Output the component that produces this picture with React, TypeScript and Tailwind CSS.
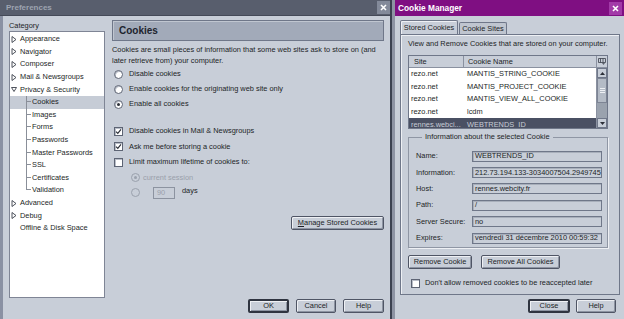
import React from "react";

type TreeItem = { label: string; level: 0 | 1; twisty?: "closed" | "open"; selected?: boolean; last?: boolean };

const treeItems: TreeItem[] = [
  { label: "Appearance", level: 0, twisty: "closed" },
  { label: "Navigator", level: 0, twisty: "closed" },
  { label: "Composer", level: 0, twisty: "closed" },
  { label: "Mail & Newsgroups", level: 0, twisty: "closed" },
  { label: "Privacy & Security", level: 0, twisty: "open" },
  { label: "Cookies", level: 1, selected: true },
  { label: "Images", level: 1 },
  { label: "Forms", level: 1 },
  { label: "Passwords", level: 1 },
  { label: "Master Passwords", level: 1 },
  { label: "SSL", level: 1 },
  { label: "Certificates", level: 1 },
  { label: "Validation", level: 1, last: true },
  { label: "Advanced", level: 0, twisty: "closed" },
  { label: "Debug", level: 0, twisty: "closed" },
  { label: "Offline & Disk Space", level: 0 },
];

const cookies = [
  { site: "rezo.net", name: "MANTIS_STRING_COOKIE" },
  { site: "rezo.net", name: "MANTIS_PROJECT_COOKIE" },
  { site: "rezo.net", name: "MANTIS_VIEW_ALL_COOKIE" },
  { site: "rezo.net", name: "lcdm" },
  { site: "rennes.webci...", name: "WEBTRENDS_ID", selected: true },
];

const fields = [
  { label: "Name:", value: "WEBTRENDS_ID" },
  { label: "Information:", value: "212.73.194.133-3034007504.2949745" },
  { label: "Host:", value: "rennes.webcity.fr" },
  { label: "Path:", value: "/" },
  { label: "Server Secure:", value: "no" },
  { label: "Expires:", value: "vendredi 31 décembre 2010 00:59:32" },
];

const Twisty = ({ open }: { open: boolean }) => (
  <svg width="6" height="7" viewBox="0 0 6 7" className="shrink-0">
    {open ? (
      <path d="M0.5 1.5 H5.5 L3 5.5 Z" fill="none" stroke="#3a3f4a" strokeWidth="0.9" />
    ) : (
      <path d="M1 0.5 V6.5 L5 3.5 Z" fill="none" stroke="#3a3f4a" strokeWidth="0.9" />
    )}
  </svg>
);

const Radio = ({ checked, disabled }: { checked?: boolean; disabled?: boolean }) => (
  <span
    className={`w-[9px] h-[9px] rounded-full border flex items-center justify-center shrink-0 ${
      disabled ? "border-[#9aa1ad] bg-[#c8ced8]" : "border-[#5d6474] bg-white shadow-[inset_1px_1px_0_#b9bec8]"
    }`}
  >
    {checked && <span className={`w-[3px] h-[3px] rounded-full ${disabled ? "bg-[#9aa1ad]" : "bg-[#2b2f38]"}`} />}
  </span>
);

const Check = ({ checked }: { checked?: boolean }) => (
  <span className="w-[9px] h-[9px] border border-[#5d6474] bg-white shadow-[inset_1px_1px_0_#b9bec8] flex items-center justify-center shrink-0">
    {checked && (
      <svg width="7" height="7" viewBox="0 0 7 7">
        <path d="M1 3.6 L2.8 5.4 L6 1.4" fill="none" stroke="#2b2f38" strokeWidth="1.2" />
      </svg>
    )}
  </span>
);

const Btn = ({ children, def, w }: { children: React.ReactNode; def?: boolean; w: string }) => (
  <div
    className={`${w} h-[14px] flex items-center justify-center rounded-[2px] bg-[#c8ced8] shadow-[inset_1px_1px_0_#eef0f4,inset_-1px_-1px_0_#8d94a2] ${
      def ? "border-2 border-[#2f3440]" : "border border-[#4f5565]"
    }`}
  >
    {children}
  </div>
);

const CloseBox = ({ bg }: { bg: string }) => (
  <div className={`w-[13px] h-[13px] flex items-center justify-center ${bg}`}>
    <svg width="7" height="7" viewBox="0 0 7 7">
      <path d="M1 1 L6 6 M6 1 L1 6" stroke="white" strokeWidth="1.6" />
    </svg>
  </div>
);

export default function App() {
  return (
    <div className="w-[624px] h-[319px] flex bg-[#c8ced8] text-[#1c1f26] text-[7.4px] leading-[10px] font-['Liberation_Sans',Arial,sans-serif] overflow-hidden">
      {/* Preferences */}
      <div className="w-[392px] h-full flex flex-col border-r-2 border-[#3b4150]">
        <div className="h-[16px] bg-[#585e6d] flex items-center justify-between pl-[6px] pr-[0px] border-b border-[#454a58]">
          <span className="font-bold text-[8px] text-[#9ea4b1]">Preferences</span>
          <CloseBox bg="bg-[#838a9a]" />
        </div>
        <div className="flex-1 flex border-l-[3px] border-[#8a91a3] pl-[6px]">
          {/* category */}
          <div className="w-[96px] flex flex-col">
            <div className="mt-[4px] h-[11px] leading-[11px]">Category</div>
            <div className="h-[267px] bg-white border border-[#7f8595] pt-[1px]">
              {treeItems.map((it) => (
                <div
                  key={it.label}
                  className={`h-[12.6px] flex items-center ${it.selected ? "bg-[#c6ccd6]" : ""}`}
                >
                  {it.level === 0 ? (
                    <div className="flex items-center pl-[1px]">
                      <span className="w-[9px] flex items-center">{it.twisty && <Twisty open={it.twisty === "open"} />}</span>
                      <span>{it.label}</span>
                    </div>
                  ) : (
                    <div className="flex items-center h-full pl-[16px]">
                      <span className="w-[5px] h-full flex flex-col">
                        <span className="h-1/2 border-l border-b border-[#8a8f99]" />
                        <span className={`h-1/2 ${it.last ? "" : "border-l border-[#8a8f99]"}`} />
                      </span>
                      <span className="ml-[1px]">{it.label}</span>
                    </div>
                  )}
                </div>
              ))}
            </div>
          </div>

          {/* cookies panel */}
          <div className="w-[272px] ml-[7px] flex flex-col pb-[6px]">
            <div className="mt-[4px] h-[21px] bg-[#a2aab9] border border-[#6f7789] shadow-[inset_1px_1px_0_#c0c6d0] flex items-center pl-[6px]">
              <span className="font-bold text-[10px] text-[#20242e]">Cookies</span>
            </div>
            <div className="mt-[4px] leading-[10.5px] whitespace-nowrap">
              Cookies are small pieces of information that some web sites ask to store on (and
              <br />
              later retrieve from) your computer.
            </div>
            <div className="mt-[0.5px] flex flex-col pl-[2px]">
              {[
                { t: "Disable cookies" },
                { t: "Enable cookies for the originating web site only" },
                { t: "Enable all cookies", c: true },
              ].map((r) => (
                <div key={r.t} className="h-[15px] flex items-center gap-[6px]">
                  <Radio checked={r.c} />
                  <span>{r.t}</span>
                </div>
              ))}
            </div>
            <div className="mt-[12px] flex flex-col pl-[2px]">
              {[
                { t: "Disable cookies in Mail & Newsgroups", c: true },
                { t: "Ask me before storing a cookie", c: true },
                { t: "Limit maximum lifetime of cookies to:" },
              ].map((r) => (
                <div key={r.t} className="h-[15.5px] flex items-center gap-[6px]">
                  <Check checked={r.c} />
                  <span>{r.t}</span>
                </div>
              ))}
            </div>
            <div className="flex flex-col pl-[19px] text-[#9aa0ab]">
              <div className="h-[15px] flex items-center gap-[3px]">
                <Radio checked disabled />
                <span>current session</span>
              </div>
              <div className="h-[15px] flex items-center">
                <Radio disabled />
                <span className="ml-[13px] w-[22px] h-[12px] border border-[#8c93a0] flex items-center pl-[3px]">90</span>
                <span className="ml-[7px] text-[#1c1f26] -mt-[3px]">days</span>
              </div>
            </div>
            <div className="mt-[15.5px] flex justify-end">
              <Btn w="w-[93px]">
                <span>
                  <span className="underline">M</span>anage Stored Cookies
                </span>
              </Btn>
            </div>
            <div className="mt-auto flex justify-end gap-[7px]">
              <Btn w="w-[41px]" def>OK</Btn>
              <Btn w="w-[40px]">Cancel</Btn>
              <Btn w="w-[41px]">Help</Btn>
            </div>
          </div>
        </div>
      </div>

      {/* Cookie Manager */}
      <div className="flex-1 h-full flex flex-col border-l-[3px] border-[#8d93a3]">
        <div className="h-[16px] bg-[#7f0f82] flex items-center justify-between pl-[3px] pr-[2px]">
          <span className="font-bold text-[8.3px] text-white">Cookie Manager</span>
          <CloseBox bg="bg-[#a23aa8]" />
        </div>
        <div className="flex-1 flex flex-col pl-[5px] pr-[4px] pb-[6px]">
          <div className="mt-[4px] flex items-end h-[14px]">
            <div className="w-[58px] h-[14px] border border-b-0 border-[#6f7789] rounded-t-[2px] flex items-center justify-center bg-[#c8ced8] shadow-[inset_1px_1px_0_#eef0f4]">
              Stored Cookies
            </div>
            <div className="w-[48px] h-[12px] border border-b-0 border-[#6f7789] rounded-t-[2px] flex items-center justify-center bg-[#bfc5cf] ml-[1px]">
              Cookie Sites
            </div>
          </div>
          <div className="h-[261px] border border-[#6f7789] shadow-[inset_1px_1px_0_#eef0f4] flex flex-col pl-[7px] pr-[11px]">
            <div className="mt-[4px] h-[10px]">View and Remove Cookies that are stored on your computer.</div>
            <div className="mt-[6px] w-[200px] h-[74px] border border-[#6f7789] bg-white flex flex-col">
              <div className="h-[12px] flex bg-[#c8ced8] border-b border-[#8a91a0]">
                <div className="w-[55px] pl-[5px] flex items-center border-r border-[#8a91a0]">Site</div>
                <div className="flex-1 pl-[4px] flex items-center">Cookie Name</div>
                <div className="w-[11px] flex items-center justify-center border-l border-[#8a91a0]">
                  <svg width="8" height="7" viewBox="0 0 8 7">
                    <path d="M0.5 0.5 H7.5 V4.5 H0.5 Z M2.5 0.5 V4.5 M5 0.5 V4.5" fill="none" stroke="#3a3f4a" strokeWidth="0.8" />
                    <path d="M4 5.3 L5.5 6.8 L7 5.3" fill="#3a3f4a" />
                  </svg>
                </div>
              </div>
              <div className="flex-1 flex overflow-hidden">
                <div className="flex-1 flex flex-col">
                  {cookies.map((c) => (
                    <div
                      key={c.name}
                      className={`h-[12.6px] shrink-0 flex items-center ${c.selected ? "bg-[#4a5063] text-[#c7ccd6]" : ""}`}
                    >
                      <span className="w-[55px] pl-[2px] whitespace-nowrap overflow-hidden">{c.site}</span>
                      <span className="pl-[3px] whitespace-nowrap">{c.name}</span>
                    </div>
                  ))}
                </div>
                <div className="w-[11px] flex flex-col bg-[#9aa2ae] border-l border-[#8a91a0]">
                  <div className="h-[10px] bg-[#c8ced8] border border-[#6f7789] flex items-center justify-center">
                    <svg width="5" height="3" viewBox="0 0 5 3"><path d="M0 3 L2.5 0 L5 3 Z" fill="#2b2f38" /></svg>
                  </div>
                  <div className="h-[25px] bg-[#b4bbc6] border border-[#7d8494] flex flex-col items-center justify-center gap-[1px]">
                    <span className="w-[5px] h-px bg-[#eef0f4]" />
                    <span className="w-[5px] h-px bg-[#eef0f4]" />
                    <span className="w-[5px] h-px bg-[#eef0f4]" />
                  </div>
                  <div className="flex-1" />
                  <div className="h-[10px] bg-[#c8ced8] border border-[#6f7789] flex items-center justify-center">
                    <svg width="5" height="3" viewBox="0 0 5 3"><path d="M0 0 L2.5 3 L5 0 Z" fill="#2b2f38" /></svg>
                  </div>
                </div>
              </div>
            </div>
            <fieldset className="mt-[3px] w-[200px] h-[116px] border border-[#8f96a4] shadow-[1px_1px_0_#eef0f4] pl-[7px] pr-[5px]">
              <legend className="ml-[6px] px-[3px] leading-[10px]">Information about the selected Cookie</legend>
              <div className="mt-[6px] flex flex-col">
                {fields.map((f) => (
                  <div key={f.label} className="h-[16.4px] flex items-center">
                    <span className="w-[56px] shrink-0">{f.label}</span>
                    <span className="flex-1 h-[11px] border border-[#6f7789] shadow-[inset_1px_1px_0_#a8afbb] pl-[2px] flex items-center whitespace-nowrap overflow-hidden">
                      {f.value}
                    </span>
                  </div>
                ))}
              </div>
            </fieldset>
            <div className="mt-[7px] flex gap-[9px]">
              <Btn w="w-[64px]">Remove Cookie</Btn>
              <Btn w="w-[79px]">Remove All Cookies</Btn>
            </div>
            <div className="mt-[9px] flex items-center gap-[5px] pl-[3px]">
              <Check />
              <span>Don't allow removed cookies to be reaccepted later</span>
            </div>
          </div>
          <div className="mt-auto flex justify-end gap-[6px] pr-[4px]">
            <Btn w="w-[42px]" def>Close</Btn>
            <Btn w="w-[40px]">Help</Btn>
          </div>
        </div>
      </div>
    </div>
  );
}
